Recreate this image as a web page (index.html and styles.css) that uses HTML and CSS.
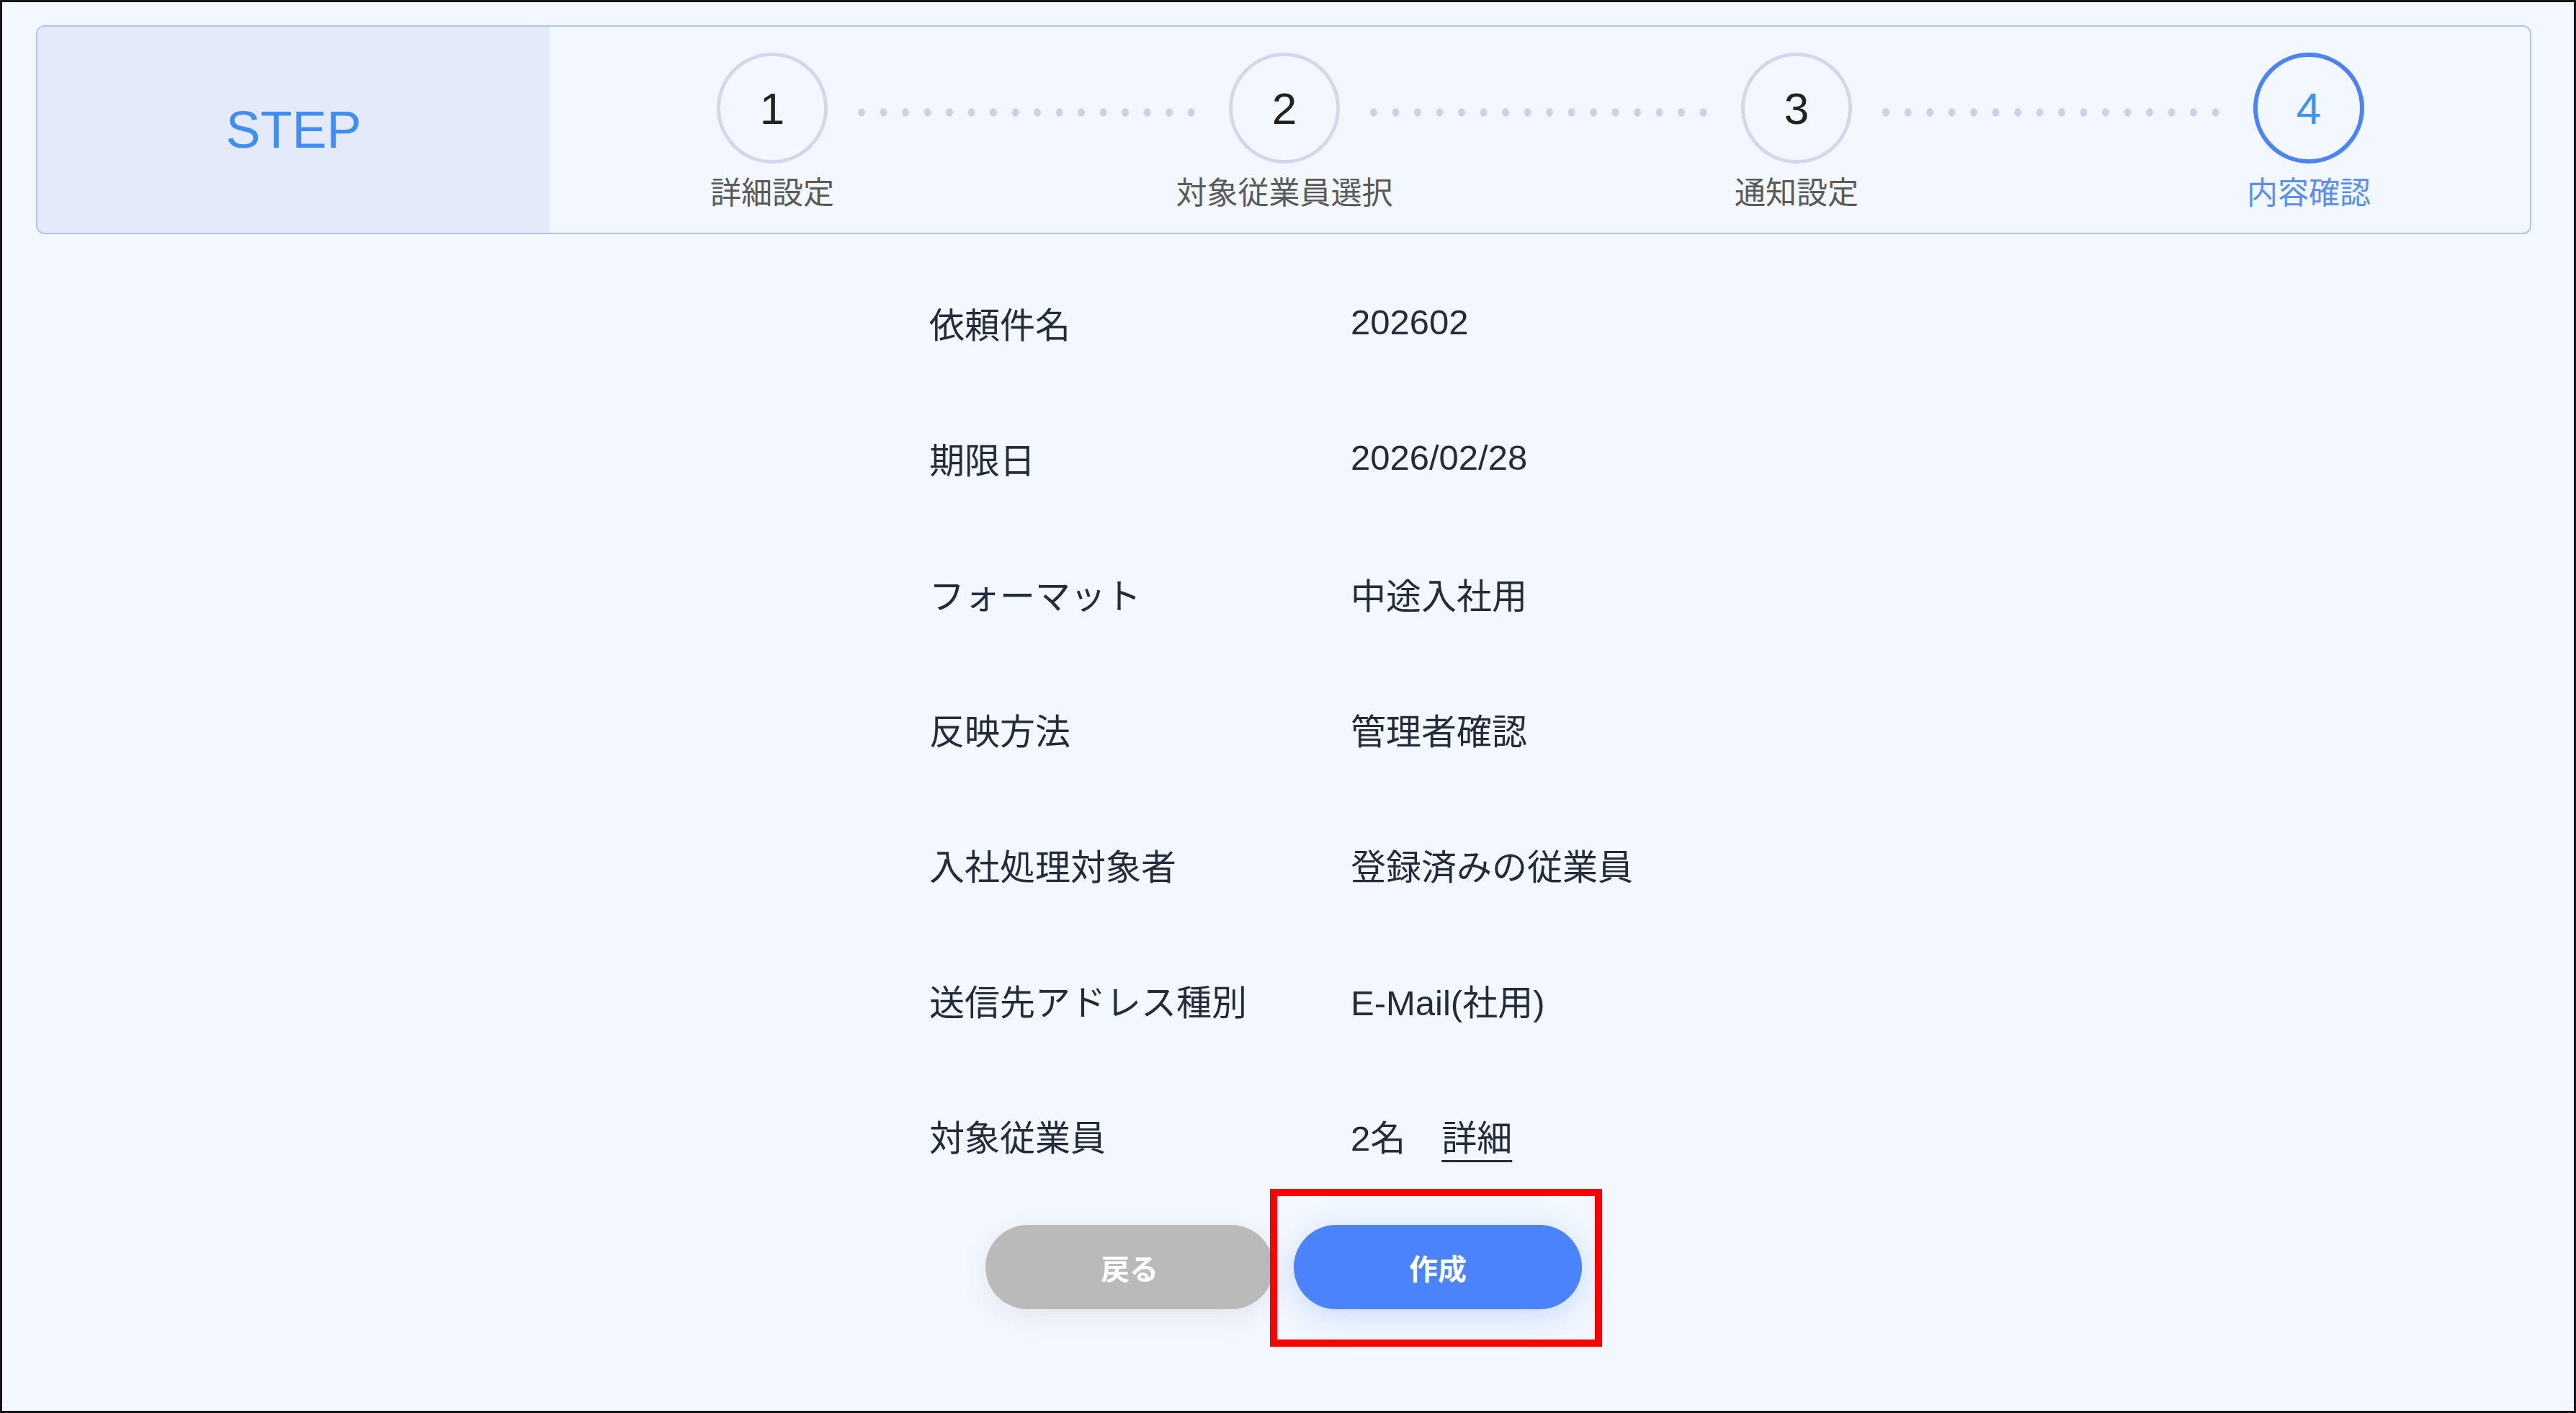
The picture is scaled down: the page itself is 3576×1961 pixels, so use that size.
FILE: index.html
```html
<!DOCTYPE html>
<html>
  <head>
    <title>内容確認</title>
    <link rel="stylesheet" href="styles.css">
  </head>
  <body>
    <div class="page">
      <div class="step-card">
        <div class="step-title">STEP</div>
        <div class="steps">
          <div class="step">
            <div class="step-num">1</div>
            <div class="step-label">詳細設定</div>
          </div>
          <div class="step-line"></div>
          <div class="step">
            <div class="step-num">2</div>
            <div class="step-label">対象従業員選択</div>
          </div>
          <div class="step-line"></div>
          <div class="step">
            <div class="step-num">3</div>
            <div class="step-label">通知設定</div>
          </div>
          <div class="step-line"></div>
          <div class="step active">
            <div class="step-num">4</div>
            <div class="step-label">内容確認</div>
          </div>
        </div>
      </div>

      <div class="details">
        <div class="row"><div class="row-label">依頼件名</div><div class="row-value">202602</div></div>
        <div class="row"><div class="row-label">期限日</div><div class="row-value">2026/02/28</div></div>
        <div class="row"><div class="row-label">フォーマット</div><div class="row-value">中途入社用</div></div>
        <div class="row"><div class="row-label">反映方法</div><div class="row-value">管理者確認</div></div>
        <div class="row"><div class="row-label">入社処理対象者</div><div class="row-value">登録済みの従業員</div></div>
        <div class="row"><div class="row-label">送信先アドレス種別</div><div class="row-value">E-Mail(社用)</div></div>
        <div class="row">
          <div class="row-label">対象従業員</div>
          <div class="row-value">2名<a class="detail-link">詳細</a></div>
        </div>
      </div>

      <div class="actions">
        <button class="btn btn-back">戻る</button>
        <div class="create-wrap">
          <button class="btn btn-create">作成</button>
          <div class="mark"></div>
        </div>
      </div>
    </div>
  </body>
</html>
```
FILE: styles.css
```css
body {
  margin: 0;
  height: 1961px;
  box-sizing: border-box;
  border: 3px solid #151515;
  background-color: #f3f8fe;
  font-family: "Liberation Sans", "Noto Sans CJK JP", sans-serif;
  color: #252b3b;
  overflow: hidden;
}
.page {
  padding: 32px 59px 0 47px;
}

/* step bar */
.step-card {
  display: flex;
  height: 290px;
  box-sizing: border-box;
  border: 2px solid #abc6f7;
  border-radius: 12px;
  overflow: hidden;
}
.step-title {
  width: 711px;
  background-color: #e4eafa;
  display: flex;
  align-items: center;
  justify-content: center;
  font-size: 72px;
  color: #3d8ef8;
}
.steps {
  flex: 1;
  display: flex;
  align-items: flex-start;
  padding: 0 230px 0 232px;
}
.step {
  width: 154px;
  display: flex;
  flex-direction: column;
  align-items: center;
  padding-top: 36px;
}
.step-num {
  width: 154px;
  height: 154px;
  box-sizing: border-box;
  border: 5px solid #d3d6ed;
  border-radius: 50%;
  display: flex;
  align-items: center;
  justify-content: center;
  font-size: 62px;
  color: #222222;
}
.step-label {
  margin-top: 16px;
  font-size: 43px;
  line-height: 50px;
  color: #5a5a5a;
  white-space: nowrap;
}
.step.active .step-num {
  border: 6px solid #4a84f8;
  color: #3f92f7;
}
.step.active .step-label {
  color: #5b8ef5;
}
.step-line {
  flex: 1;
  margin: 113px 40px 0 42px;
  height: 12px;
  background-image: radial-gradient(ellipse 5px 6px at 5px 50%, #ccd0eb 90%, transparent 100%);
  background-size: 30.5px 12px;
  background-repeat: repeat-x;
}

/* summary rows */
.details {
  width: 984px;
  margin: 28px auto 0;
}
.row {
  height: 188px;
  display: flex;
  align-items: center;
  font-size: 49px;
}
.row-label {
  width: 585px;
}
.detail-link {
  margin-left: 50px;
  text-decoration: underline;
  text-decoration-thickness: 3px;
  text-underline-offset: 13px;
  cursor: pointer;
}

/* buttons */
.actions {
  display: flex;
  justify-content: center;
  gap: 28px;
  margin-top: 31px;
}
.btn {
  width: 400px;
  height: 117px;
  border: none;
  border-radius: 59px;
  font-family: "Liberation Sans", "Noto Sans CJK JP", sans-serif;
  font-size: 40px;
  font-weight: bold;
  color: #ffffff;
  cursor: pointer;
}
.btn-back {
  background-color: #bababa;
  box-shadow: 0 10px 45px rgba(0, 0, 0, 0.07);
}
.btn-create {
  background-color: #4a83fb;
  box-shadow: 0 10px 45px rgba(74, 131, 251, 0.25);
}
.create-wrap {
  position: relative;
}
.mark {
  position: absolute;
  left: -33px;
  right: -28px;
  top: -50px;
  bottom: -52px;
  border: 10px solid #ff0000;
}
```
